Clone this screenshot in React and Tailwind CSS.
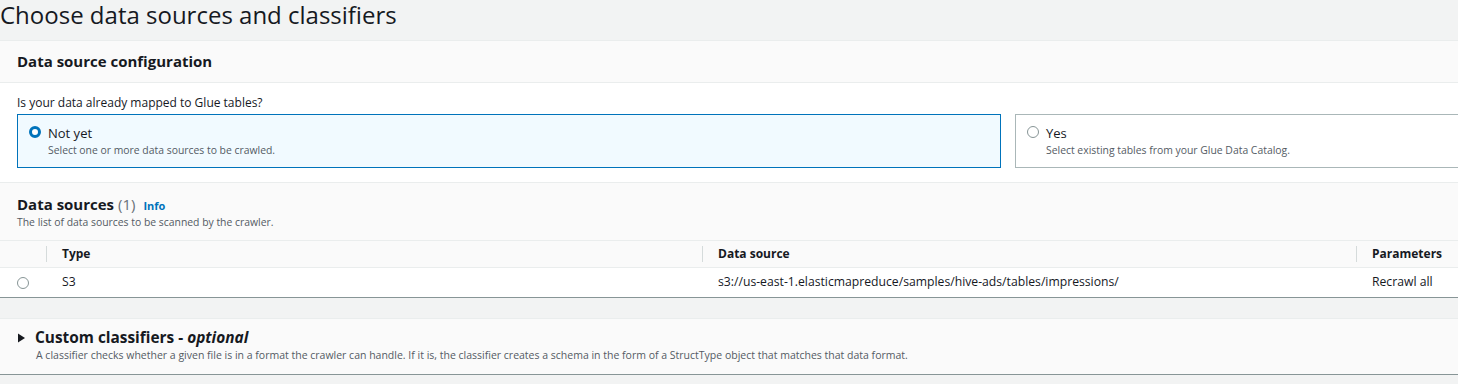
const font = { fontFamily: '"Open Sans", "Noto Sans", sans-serif' };

const Radio = ({ checked }) =>
  checked ? (
    <span className="block w-[12px] h-[12px] rounded-full border-[3.5px] border-[#0073bb] bg-white" />
  ) : (
    <span className="block w-[12px] h-[12px] rounded-full border border-[#879596] bg-white" />
  );

const Tile = ({ checked, title, desc, className }) => (
  <div
    className={
      "flex items-start gap-[7px] pl-[11px] pt-[10px] h-[54px] border " +
      (checked ? "border-[#0073bb] bg-[#f1faff] " : "border-[#aab7b8] bg-white ") +
      className
    }
  >
    <div className="pt-[1px]">
      <Radio checked={checked} />
    </div>
    <div>
      <div className="text-[13px] leading-[16px] text-[#16191f]">{title}</div>
      <div className="text-[10.4px] leading-[14px] mt-[2px] text-[#545b64]">{desc}</div>
    </div>
  </div>
);

export default function App() {
  return (
    <div className="w-[1458px] h-[384px] bg-[#f2f3f3] overflow-hidden text-[#16191f]" style={font}>
      <h1 className="h-[40px] text-[24px] leading-[30px] font-normal whitespace-nowrap">
        Choose data sources and classifiers
      </h1>

      <div className="border-t border-[#eaeded]">
        <div className="h-[42px] bg-[#fafafa] border-b border-[#eaeded] flex items-center px-[17px]">
          <h2 className="text-[15px] font-bold">Data source configuration</h2>
        </div>
        <div className="bg-white h-[99px] pl-[17px] pt-[12px]">
          <div className="text-[12px] leading-[16px] mb-[3px]">Is your data already mapped to Glue tables?</div>
          <div className="flex gap-[14px]">
            <Tile checked className="w-[984px] shrink-0" title="Not yet" desc="Select one or more data sources to be crawled." />
            <Tile className="w-[460px] shrink-0" title="Yes" desc="Select existing tables from your Glue Data Catalog." />
          </div>
        </div>
      </div>

      <div className="border-t border-[#eaeded] border-b border-b-[#879596]">
        <div className="h-[57px] bg-[#fafafa] px-[17px] pt-[11px]">
          <div className="flex items-baseline gap-[8px]">
            <h2 className="text-[15px] leading-[20px] font-bold">
              Data sources <span className="font-normal text-[#687078]">(1)</span>
            </h2>
            <a className="text-[11px] font-bold text-[#0073bb]">Info</a>
          </div>
          <div className="text-[10.4px] leading-[14px] text-[#545b64]">The list of data sources to be scanned by the crawler.</div>
        </div>
        <div className="h-[28px] bg-[#fafafa] border-t border-[#eaeded] border-b border-b-[#eaeded] flex items-center text-[12px] font-bold text-[#16191f]">
          <div className="w-[47px] h-[16px] border-r border-[#d5dbdb]" />
          <div className="w-[656px] pl-[15px] h-[16px] leading-[16px] border-r border-[#d5dbdb]">Type</div>
          <div className="w-[654px] pl-[15px] h-[16px] leading-[16px] border-r border-[#d5dbdb]">Data source</div>
          <div className="pl-[15px] leading-[16px]">Parameters</div>
        </div>
        <div className="h-[29px] bg-white flex items-center text-[12.2px]">
          <div className="w-[47px] pl-[17px]">
            <Radio />
          </div>
          <div className="w-[656px] pl-[15px]">S3</div>
          <div className="w-[654px] pl-[15px]">s3://us-east-1.elasticmapreduce/samples/hive-ads/tables/impressions/</div>
          <div className="pl-[15px]">Recrawl all</div>
        </div>
      </div>

      <div className="mt-[20px] border-t border-[#eaeded] border-b border-b-[#879596] bg-[#fafafa] h-[57px] pl-[17px] pt-[9px]">
        <div className="flex items-center gap-[9px]">
          <svg width="9" height="10" viewBox="0 0 9 10">
            <path d="M1 0.5 L8 5 L1 9.5 Z" fill="#16191f" />
          </svg>
          <h2 className="text-[15.4px] leading-[20px] font-bold">
            Custom classifiers - <i>optional</i>
          </h2>
        </div>
        <div className="pl-[19px] text-[10.5px] leading-[14px] text-[#545b64]">
          A classifier checks whether a given file is in a format the crawler can handle. If it is, the classifier creates a schema in the form of a StructType object that matches that data format.
        </div>
      </div>
    </div>
  );
}
